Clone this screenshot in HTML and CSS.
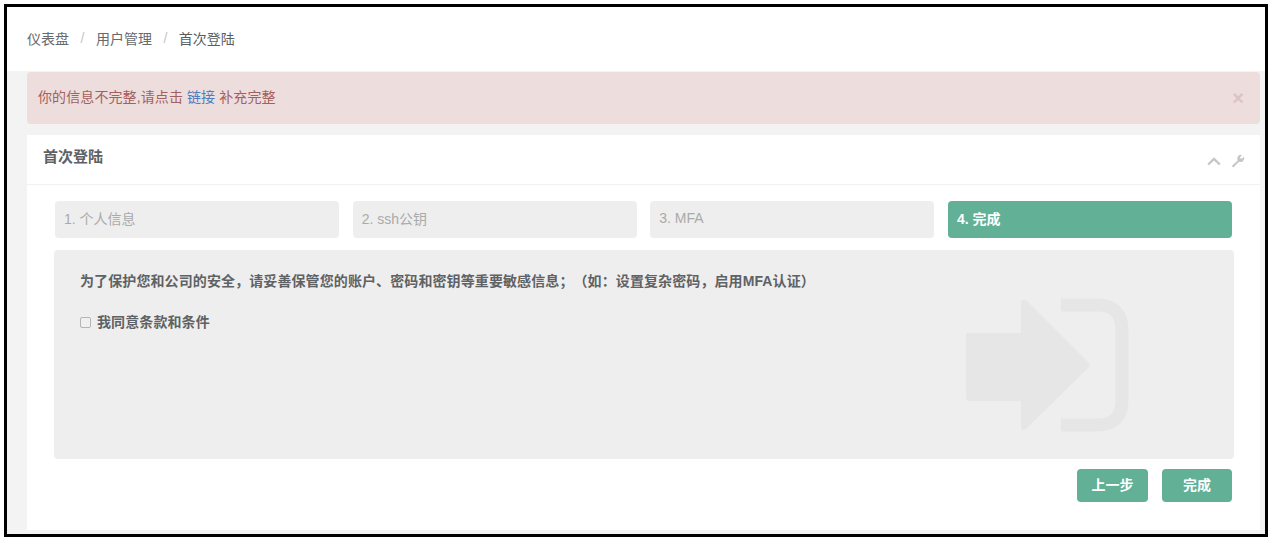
FILE: index.html
```html
<!DOCTYPE html>
<html lang="zh-CN">
<head>
    <meta charset="UTF-8">
    <meta name="viewport" content="width=device-width, initial-scale=1.0">
    <title>首次登陆</title>
    <link rel="stylesheet" href="styles.css">
</head>
<body>
    <div class="frame">
        <div class="breadcrumb">
            <span>仪表盘</span>
            <span class="sep">/</span>
            <span>用户管理</span>
            <span class="sep">/</span>
            <span class="current">首次登陆</span>
        </div>

        <div class="wrapper">
            <div class="alert">
                <span>你的信息不完整,请点击 <a href="#">链接</a> 补充完整</span>
                <span class="alert-close">×</span>
            </div>

            <div class="card">
                <div class="card-title">
                    <h5>首次登陆</h5>
                    <div class="card-tools">
                        <svg width="14" height="10" viewBox="0 0 14 10"><path d="M1.2 8.5 L7 3 L12.8 8.5" fill="none" stroke="#c4c6c8" stroke-width="2.4"/></svg>
                        <svg width="14" height="14" viewBox="0 0 14 14"><path d="M0.8 12 L6.6 6.4 A3.8 3.8 0 0 1 11 1 L8.8 3.4 L10.4 5 L13 2.8 A3.9 3.9 0 0 1 8 7.8 L2.4 13.6 Z" fill="#c4c6c8"/></svg>
                    </div>
                </div>

                <div class="card-body">
                    <div class="steps">
                        <div class="step">1. 个人信息</div>
                        <div class="step">2. ssh公钥</div>
                        <div class="step">3. MFA</div>
                        <div class="step active">4. 完成</div>
                    </div>

                    <div class="panel">
                        <svg class="watermark" width="166" height="138" viewBox="0 0 166 138">
                            <path d="M2 37 H57 V8 Q57 1 63 5 L124 66 Q127 69 124 72 L63 132 Q57 137 57 130 V105 H6 Q2 105 2 101 Z" fill="#e6e6e6"/>
                            <path d="M97 9 H133 Q158 9 158 34 V104 Q158 129 133 129 H97" fill="none" stroke="#e6e6e6" stroke-width="13"/>
                        </svg>
                        <p class="panel-text">为了保护您和公司的安全，请妥善保管您的账户、密码和密钥等重要敏感信息；（如：设置复杂密码，启用MFA认证）</p>
                        <label class="agree"><span class="checkbox"></span>我同意条款和条件</label>
                    </div>

                    <div class="actions">
                        <a class="btn btn-prev" href="#">上一步</a>
                        <a class="btn" href="#">完成</a>
                    </div>
                </div>
            </div>
        </div>
    </div>
</body>
</html>
```

FILE: styles.css
```css
html, body {
    height: 100%;
}

body {
    margin: 0;
    padding: 4px 3px 4px 4px;
    box-sizing: border-box;
    background-color: white;
    font-family: "Liberation Sans", "Noto Sans CJK SC", sans-serif;
    font-size: 14px;
    color: #676a6c;
    text-spacing-trim: space-all;
}

.frame {
    height: 533px;
    border: 3px solid black;
    box-sizing: border-box;
    display: flex;
    flex-direction: column;
    background-color: #f3f3f4;
}

.breadcrumb {
    height: 64px;
    flex-shrink: 0;
    padding: 0 0 3px 20px;
    box-sizing: border-box;
    background-color: white;
    display: flex;
    align-items: center;
    gap: 11.5px;
}

.breadcrumb .sep {
    color: #c4c6c8;
}

.breadcrumb .current {
    color: #5a5d5f;
}

.wrapper {
    flex: 1;
    padding: 1px 5px 4px 20px;
    display: flex;
    flex-direction: column;
    gap: 11px;
}

.alert {
    height: 52px;
    flex-shrink: 0;
    box-sizing: border-box;
    padding: 0 16px 4px 11px;
    background-color: #eddddd;
    border-radius: 4px;
    color: #a3605f;
    letter-spacing: 0.1px;
    display: flex;
    align-items: center;
    justify-content: space-between;
}

.alert a {
    color: #4f7cc0;
    text-decoration: none;
}

.alert-close {
    margin-top: 4px;
    font-size: 20px;
    font-weight: bold;
    color: #d9c4c4;
    line-height: 1;
}

.card {
    flex: 1;
    background-color: white;
    display: flex;
    flex-direction: column;
}

.card-title {
    height: 50px;
    flex-shrink: 0;
    box-sizing: border-box;
    padding: 0 15px 8px 16px;
    border-bottom: 1px solid #f1f1f1;
    display: flex;
    align-items: center;
    justify-content: space-between;
}

.card-title h5 {
    margin: 0;
    font-size: 15px;
    font-weight: bold;
    color: #5f6264;
}

.card-tools {
    margin-top: 11px;
    display: flex;
    align-items: center;
    gap: 10px;
}

.card-body {
    padding: 16px 26px 0 27px;
}

.steps {
    display: grid;
    grid-template-columns: repeat(4, 1fr);
    gap: 13.5px;
    padding: 0 2px 0 1px;
}

.step {
    height: 37px;
    box-sizing: border-box;
    padding: 0 0 3px 9px;
    background-color: #eeeeee;
    border-radius: 4px;
    color: #aaaaaa;
    display: flex;
    align-items: center;
}

.step.active {
    background-color: #62b096;
    color: white;
    font-weight: bold;
}

.panel {
    position: relative;
    height: 209px;
    margin-top: 12px;
    box-sizing: border-box;
    padding: 22px 26px;
    background-color: #eeeeee;
    border-radius: 4px;
    color: #5f6264;
    letter-spacing: 0.1px;
    overflow: hidden;
}

.watermark {
    position: absolute;
    left: 910px;
    top: 46px;
}

.panel-text {
    position: relative;
    margin: 0 0 23px;
    font-weight: bold;
    line-height: 18px;
}

.agree {
    position: relative;
    display: flex;
    align-items: center;
    gap: 6px;
    font-weight: bold;
    line-height: 18px;
}

.checkbox {
    width: 9px;
    height: 9px;
    border: 1px solid #b5b5b5;
    border-radius: 2px;
    background-color: #f0f0f0;
}

.actions {
    margin-top: 10px;
    padding-right: 2px;
    display: flex;
    justify-content: flex-end;
    gap: 14px;
}

.btn {
    width: 70px;
    height: 33px;
    box-sizing: border-box;
    padding-bottom: 3px;
    background-color: #62b096;
    border-radius: 4px;
    color: white;
    font-weight: bold;
    text-decoration: none;
    display: flex;
    align-items: center;
    justify-content: center;
}

.btn-prev {
    width: 71px;
}
```
